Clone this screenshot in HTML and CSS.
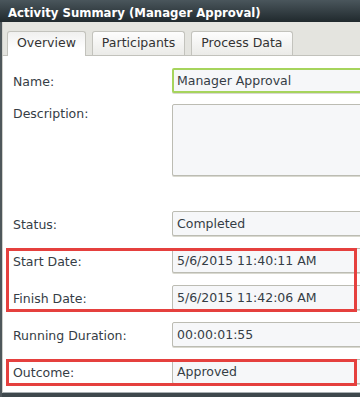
FILE: index.html
```html
<!DOCTYPE html>
<html>
<head>
<meta charset="utf-8">
<link rel="stylesheet" href="styles.css">
</head>
<body>
<div class="window">
  <div class="titlebar">Activity Summary (Manager Approval)</div>
  <div class="frame">
    <div class="tabs">
      <div class="tab active">Overview</div>
      <div class="tab">Participants</div>
      <div class="tab">Process Data</div>
    </div>
    <div class="panel">
      <div class="row">
        <div class="label">Name:</div>
        <div class="field focus">Manager Approval</div>
      </div>
      <div class="row top desc">
        <div class="label">Description:</div>
        <div class="field textarea"></div>
      </div>
      <div class="row">
        <div class="label">Status:</div>
        <div class="field">Completed</div>
      </div>
      <div class="group">
        <div class="row">
          <div class="label">Start Date:</div>
          <div class="field">5/6/2015 11:40:11 AM</div>
        </div>
        <div class="row">
          <div class="label">Finish Date:</div>
          <div class="field">5/6/2015 11:42:06 AM</div>
        </div>
      </div>
      <div class="row">
        <div class="label">Running Duration:</div>
        <div class="field">00:00:01:55</div>
      </div>
      <div class="group">
        <div class="row">
          <div class="label">Outcome:</div>
          <div class="field">Approved</div>
        </div>
      </div>
    </div>
  </div>
</div>
</body>
</html>
```
FILE: styles.css
```css
html, body {
  margin: 0;
  padding: 0;
}
body {
  width: 360px;
  height: 397px;
  overflow: hidden;
  background: #3e484c;
  font-family: "DejaVu Sans", Verdana, sans-serif;
}
.window {
  width: 360px;
  height: 397px;
  display: flex;
  flex-direction: column;
  overflow: hidden;
}
.titlebar {
  height: 22px;
  box-sizing: border-box;
  padding: 4px 0 0 8px;
  line-height: 18px;
  font-family: "DejaVu Sans Condensed", "DejaVu Sans", sans-serif;
  font-stretch: condensed;
  font-size: 13px;
  font-weight: bold;
  color: #fff;
  background: linear-gradient(#4a565c, #20292d);
  white-space: nowrap;
}
.frame {
  flex: 1;
  display: flex;
  flex-direction: column;
  border-left: 2px solid #4e575b;
  padding-bottom: 4px;
  min-height: 0;
}
.tabs {
  height: 34px;
  box-sizing: border-box;
  display: flex;
  align-items: flex-end;
  gap: 6px;
  padding: 0 0 0 4px;
  background: #e4e4df;
  border-bottom: 1px solid #c2c2bc;
  border-left: 1px solid #cfcfca;
}
.tab {
  height: 24px;
  box-sizing: border-box;
  padding: 3px 9px 0;
  border: 1px solid #c3c3bd;
  border-bottom: none;
  border-radius: 3px 3px 0 0;
  background: linear-gradient(#fdfdfd, #ebebe8);
  font-size: 12.5px;
  line-height: 15px;
  color: #333;
  white-space: nowrap;
}
.tab.active {
  height: 25px;
  margin-bottom: -1px;
  background: linear-gradient(#f0f0ef, #ffffff 70%);
  position: relative;
}
.panel {
  flex: 1;
  display: flex;
  flex-direction: column;
  gap: 12px;
  padding-top: 12px;
  background: #fff;
  border-left: 1px solid #cfcfca;
  border-bottom: 1px solid #a9b0b3;
  min-height: 0;
  overflow: hidden;
}
.row {
  display: flex;
  align-items: center;
  padding-left: 10px;
}
.row.top {
  align-items: flex-start;
}
.row.desc {
  margin-top: -1px;
  margin-bottom: 23px;
}
.label {
  width: 159px;
  flex: none;
  padding-top: 2px;
  font-size: 12.5px;
  line-height: 15px;
  color: #353d45;
  white-space: nowrap;
}
.field {
  flex: none;
  width: 200px;
  height: 25px;
  box-sizing: border-box;
  border: 1px solid #bcbcb3;
  border-radius: 2px;
  background: #f6f7f9;
  padding-left: 4px;
  font-size: 12.5px;
  line-height: 23px;
  color: #353d45;
  box-shadow: 0 1px 0 #d9d9d0;
  white-space: nowrap;
}
.field.focus {
  border: 2px solid #a6d45c;
  padding-left: 3px;
  line-height: 21px;
}
.field.textarea {
  height: 72px;
}
.group {
  position: relative;
  display: flex;
  flex-direction: column;
  gap: 12px;
}
.group::after {
  content: "";
  position: absolute;
  left: 3px;
  width: 351px;
  top: 0;
  bottom: -2px;
  box-sizing: border-box;
  border: 3px solid #e5403e;
  pointer-events: none;
}
```
